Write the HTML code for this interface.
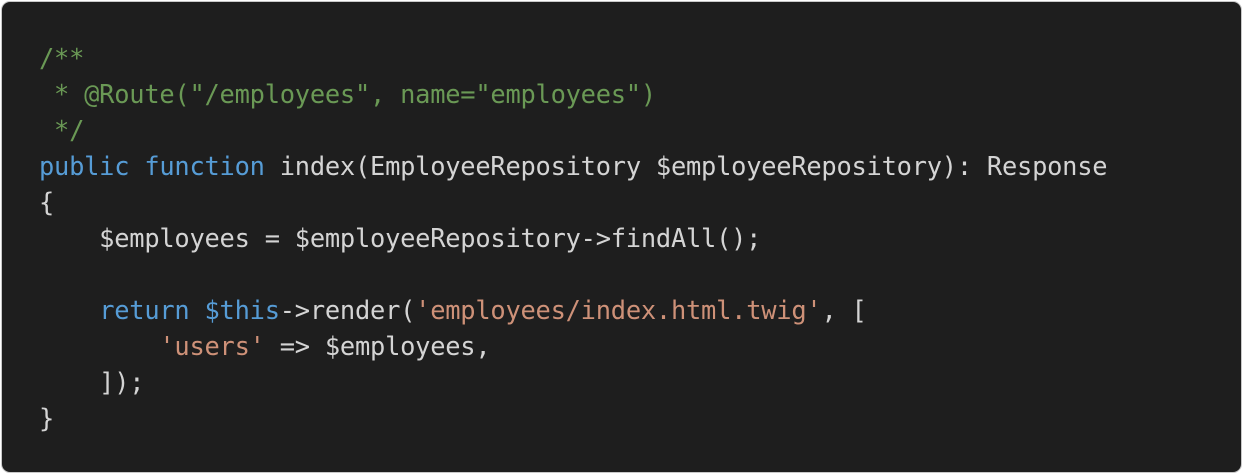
<!DOCTYPE html>
<html><head><style>
html,body{margin:0;padding:0;background:#fff;width:1243px;height:474px;overflow:hidden}
.box{position:absolute;left:1px;top:1px;width:1239px;height:470px;background:#1e1e1e;border:1px solid #c8c8c8;border-radius:9px}
pre{position:absolute;left:39px;top:39.5px;margin:0;font-family:"DejaVu Sans Mono","Liberation Mono",monospace;font-size:25.4px;line-height:36.1px;color:#d4d4d4;letter-spacing:-0.24px}
.c{color:#6a9955}.k{color:#569cd6}.s{color:#ce9178}
</style></head><body>
<div class="box"></div>
<pre><span class="c">/**
 * @Route("/employees", name="employees")
 */</span>
<span class="k">public</span> <span class="k">function</span> index(EmployeeRepository $employeeRepository): Response
{
    $employees = $employeeRepository-&gt;findAll();

    <span class="k">return</span> <span class="k">$this</span>-&gt;render(<span class="s">'employees/index.html.twig'</span>, [
        <span class="s">'users'</span> =&gt; $employees,
    ]);
}</pre>
</body></html>
